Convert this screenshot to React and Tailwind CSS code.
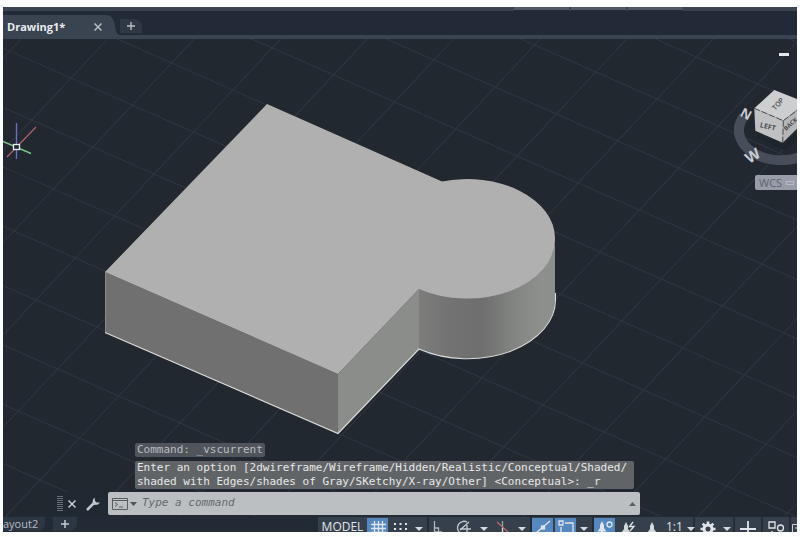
import React from "react";

const GRID_LINES = (() => {
  const ox = 434, oy = 60;
  const a = [61.2, 27];
  const b = [-39.4, 42];
  const lines = [];
  for (let k = -14; k <= 18; k++) {
    const bx = ox + k * b[0], by = oy + k * b[1];
    lines.push([bx - 20 * a[0], by - 20 * a[1], bx + 20 * a[0], by + 20 * a[1]]);
    const ax = ox + k * a[0], ay = oy + k * a[1];
    lines.push([ax - 20 * b[0], ay - 20 * b[1], ax + 20 * b[0], ay + 20 * b[1]]);
  }
  return lines;
})();

function Model() {
  return (
    <svg
      className="absolute inset-0 h-full w-full"
      viewBox="3 39 794 477"
      preserveAspectRatio="xMinYMin slice"
      role="img"
      aria-label="Shaded solid model"
    >
      <defs>
        <linearGradient id="barrel" gradientUnits="userSpaceOnUse" x1="419" y1="0" x2="556" y2="0">
          <stop offset="0" stopColor="#7d7d7c" />
          <stop offset="0.2" stopColor="#737373" />
          <stop offset="0.45" stopColor="#6d6e6d" />
          <stop offset="0.7" stopColor="#838583" />
          <stop offset="0.9" stopColor="#8e908e" />
          <stop offset="1" stopColor="#8b8f8b" />
        </linearGradient>
      </defs>
      <g stroke="#2d363e" strokeWidth="1.1">
        {GRID_LINES.map((l, i) => (
          <line key={i} x1={l[0]} y1={l[1]} x2={l[2]} y2={l[3]} />
        ))}
      </g>
      <path d="M105 272 L338 374 V433.5 L105 332.5 Z" fill="#707070" />
      <path d="M338 374 L419 289 V349 L338 433.5 Z" fill="#8a8d89" />
      <path d="M419 288 A88 59 0 0 0 555 238.500 V298.500 A88 59 0 0 1 419 349 Z" fill="url(#barrel)" />
      <path
        d="M267 104 L442 181.500 A88 59 0 0 1 555 238.500 A88 59 0 0 1 419 289 L338 374 L105 272 Z"
        fill="#b0b0b0"
      />
      <path
        d="M105 332.500 L338 433.500 L419 349 A88 59 0 0 0 555.500 298.500 V293"
        fill="none"
        stroke="#dcdedc"
        strokeWidth="1.1"
      />
      <path d="M105.500 272 V332" stroke="#8b8d8b" strokeWidth="0.8" />
      <path d="M16.500 123 V159" stroke="#6f6cc0" strokeWidth="1.4" />
      <path d="M36 127 L7 157" stroke="#b5616c" strokeWidth="1.2" />
      <path d="M3 141.500 L31 153.500" stroke="#7cc58a" strokeWidth="1.4" />
      <rect x="13.500" y="144.500" width="6" height="5" fill="#212a33" stroke="#e8ecee" strokeWidth="1.3" />
    </svg>
  );
}

function ViewCube() {
  return (
    <svg
      className="absolute right-0 top-[46px] h-[85px] w-[65px] font-['Open_Sans',sans-serif]"
      viewBox="732 85 65 85"
      role="img"
      aria-label="View cube"
    >
      <path d="M744 116 A42 30 0 0 0 800 157" fill="none" stroke="#474e5a" strokeWidth="10" />
      <path d="M757 133 L783 145 L797 132 V140 L784 150 L760 139 Z" fill="#1c242c" />
      <path d="M774.300 90 L754.300 108.300 L783.300 120.700 L806 102.500 Z" fill="#cdcecf" />
      <path d="M754.300 108.300 L755.300 130.700 L782.700 142.700 L783.300 120.700 Z" fill="#c0c1c2" />
      <path d="M783.300 120.700 L782.700 142.700 L806 120 V103 Z" fill="#b5b6b7" />
      <path
        d="M754.300 108.300 L783.300 120.700 L797 110.500 M783.300 120.700 L782.700 142.700"
        fill="none"
        stroke="#4a4d50"
        strokeWidth="1"
        strokeDasharray="6 2"
      />
      <text x="778" y="106.500" fontSize="7" fontWeight="600" fill="#4d4f52" textAnchor="middle" transform="rotate(-48 778 104)">TOP</text>
      <text x="768" y="129" fontSize="7" fontWeight="700" fill="#4d4f52" textAnchor="middle" transform="rotate(14 768 126)">LEFT</text>
      <text x="786" y="131" fontSize="6" fontWeight="700" fill="#4d4f52" transform="rotate(-42 786 131)">BACK</text>
      <text x="746" y="118.500" fontSize="13" fontWeight="700" fill="#c9ccd0" textAnchor="middle" transform="rotate(28 746 114)">N</text>
      <text x="752.500" y="161" fontSize="15" fontWeight="700" fill="#c9ccd0" textAnchor="middle" transform="rotate(-32 752.5 155.5)">W</text>
    </svg>
  );
}

function Caret({ label }) {
  return (
    <button type="button" aria-label={label} className="flex h-5 w-4 justify-center pt-[10px]">
      <svg className="h-1 w-2" viewBox="0 0 8 4"><path d="M0 0 H8 L4 4 Z" fill="#d6dadf" /></svg>
    </button>
  );
}

function Tool({ label, active, wide, children }) {
  return (
    <button
      type="button"
      aria-label={label}
      aria-pressed={!!active}
      className={`flex h-6 justify-center ${wide ? "w-[26px]" : "w-[21px]"} ${active ? "mt-px bg-[#5688c0]" : "pt-px"}`}
    >
      <svg className="h-5 w-5 shrink-0" viewBox="0 0 20 20" fill="none" stroke="#e1e5e9" strokeWidth="1.3">
        {children}
      </svg>
    </button>
  );
}

function Group({ children }) {
  return <div className="flex h-6 shrink-0 bg-[#36404d]">{children}</div>;
}

const PERSON = "M10 4 L12 8 V11 L14.500 14.500 H11 V20 H9 V14.500 H5.500 L8 11 V8 Z";

function StatusBar() {
  return (
    <footer className="flex h-4 shrink-0 items-start overflow-hidden bg-[#212a35] pt-px font-['Open_Sans',sans-serif]">
      <nav className="flex items-start" aria-label="Layouts">
        <button type="button" className="h-[14px] w-[42px] rounded-br-lg bg-[#2d3743] text-left text-[11px] leading-3 text-[#b4bac2]">
          ayout2
        </button>
        <button type="button" aria-label="New layout" className="ml-2 flex h-[14px] w-6 items-center justify-center rounded-br-lg bg-[#2d3743]">
          <svg className="h-2 w-2" viewBox="0 0 8 8"><path d="M4 0 V8 M0 4 H8" stroke="#c6cbd1" strokeWidth="1.500" /></svg>
        </button>
      </nav>
      <div className="ml-auto flex h-6 shrink-0 gap-[2px] bg-[#232c37]">
        <Group>
          <button type="button" className="flex w-[49px] items-start justify-center text-xs leading-5 text-[#e1e4e8]">MODEL</button>
          <Tool label="Grid" active>
            <path d="M6.500 3 V20 M10.500 3 V20 M14.500 3 V20 M3 6.500 H18 M3 10.500 H18 M3 14.500 H18" />
          </Tool>
          <Tool label="Snap" wide>
            <path d="M3 6 h2 M8.500 6 h2 M14 6 h2 M3 11 h2 M8.500 11 h2 M14 11 h2" strokeWidth="2" />
          </Tool>
          <div className="-ml-1 flex w-[17px] justify-center"><Caret label="Snap options" /></div>
        </Group>
        <Group>
          <Tool label="Ortho"><path d="M4.500 3 V14 H12 M4.500 10 H8.500 V14" stroke="#b0b6be" /></Tool>
          <Tool label="Polar tracking" wide>
            <path d="M14 4 A6.500 6.500 0 1 0 16 14 M7 12 L16 4 M7 11 H18 M14 7 V15" stroke="#c4cad0" />
          </Tool>
          <Caret label="Polar options" />
          <Tool label="Isometric drafting">
            <path d="M9.500 3 V10" stroke="#7fb39a" /><path d="M4 4 L15 14" stroke="#bb656c" /><path d="M9.500 10 V20" />
          </Tool>
          <div className="flex w-[17px] justify-center"><Caret label="Isometric options" /></div>
        </Group>
        <Group>
          <div className="flex gap-[2px]">
            <Tool label="Object snap tracking" active>
              <path d="M3 15 L17 3" /><rect x="8.500" y="8" width="3" height="3" fill="#e1e5e9" />
            </Tool>
            <Tool label="Object snap" active>
              <path d="M3 3 h4 v4 h-4 Z M9 5 H17 V20 M5 9 V20" />
            </Tool>
          </div>
          <Caret label="Object snap options" />
        </Group>
        <Group>
          <Tool label="Annotation visibility" active>
            <path d={PERSON} fill="#e1e5e9" stroke="none" transform="translate(-3 -1)" /><circle cx="14.500" cy="6.500" r="2.500" />
          </Tool>
          <Tool label="Auto scale" wide>
            <path d={PERSON} fill="#d3d8dd" stroke="none" transform="translate(-2 0)" /><path d="M15 4 L11.500 8.500 H16 L12 13" />
          </Tool>
          <Tool label="Annotation scale"><path d={PERSON} fill="#d3d8dd" stroke="none" /></Tool>
          <button type="button" className="flex w-[31px] items-start gap-1 pl-1 text-xs leading-5 text-[#e1e4e8]">
            1:1
            <svg className="mt-[10px] h-1 w-2 shrink-0" viewBox="0 0 8 4"><path d="M0 0 H8 L4 4 Z" fill="#d6dadf" /></svg>
          </button>
        </Group>
        <Group>
          <Tool label="Workspace" wide>
            <circle cx="10" cy="11" r="4" strokeWidth="3" />
            <path d="M10 3.500 V6 M10 16 V19 M2.500 11 H5 M15 11 H17.500 M4.700 5.700 L6.500 7.500 M15.300 5.700 L13.500 7.500 M4.700 16.300 L6.500 14.500 M15.300 16.300 L13.500 14.500" strokeWidth="2.600" />
          </Tool>
          <div className="flex w-3 justify-center"><Caret label="Workspace options" /></div>
        </Group>
        <Group>
          <Tool label="Annotation monitor" wide><path d="M10 3 V20 M2 11 H18" strokeWidth="1.800" /></Tool>
        </Group>
        <Group>
          <Tool label="Isolate objects" wide>
            <path d="M3 4 h6 v6 h-6 Z M6 13 v4 h5" /><circle cx="14.500" cy="10" r="3" />
          </Tool>
        </Group>
        <Group>
          <button type="button" aria-label="Full screen" className="w-[6px] overflow-hidden pt-1">
            <svg className="h-4 w-4" viewBox="0 0 16 16" fill="none" stroke="#cdd2d7"><path d="M1.500 1.500 H14 V14 H1.500 Z M4 5 H8" /></svg>
          </button>
        </Group>
      </div>
    </footer>
  );
}

function CommandWindow() {
  return (
    <section
      aria-label="Command line"
      className="absolute inset-x-0 bottom-0 pl-[50px] pr-[157px] pb-px font-['DejaVu_Sans_Mono',monospace] text-[11px]"
    >
      <div className="flex flex-col items-start gap-1 pb-[3px] pl-[82px]">
        <p className="rounded-xs bg-[#4f555b] px-[2px] leading-[14px] text-[#b9bdc1]">Command: _vscurrent</p>
        <p className="mr-[6px] self-stretch whitespace-nowrap rounded-xs bg-[#616466] px-[2px] leading-[14px] text-[#e6e8e9]">
          Enter an option [2dwireframe/Wireframe/Hidden/Realistic/Conceptual/Shaded/
          <br />
          shaded with Edges/shades of Gray/SKetchy/X-ray/Other] &lt;Conceptual&gt;: _r
        </p>
      </div>
      <div className="flex h-[23px]">
        <div className="flex w-[55px] shrink-0 items-center gap-1 bg-[#202832] pl-1">
          <svg className="h-4 w-[6px]" viewBox="0 0 6 16">
            <path d="M1 0 V16 M3 0 V16 M5 0 V16" stroke="#aeb4ba" strokeDasharray="1 1" />
          </svg>
          <button type="button" aria-label="Close command line">
            <svg className="h-[10px] w-[10px]" viewBox="0 0 10 10"><path d="M1.500 1.500 L8.500 8.500 M8.500 1.500 L1.500 8.500" stroke="#c3c8cd" strokeWidth="1.500" /></svg>
          </button>
          <button type="button" aria-label="Customize" className="ml-1">
            <svg className="h-4 w-4" viewBox="0 0 16 16">
              <path d="M2 14 L8.500 7.500" stroke="#c3c8cd" strokeWidth="2.500" />
              <path d="M9.500 1.500 L8 3.500 L7.500 6.500 L9.500 9 L13 8.500 L15 6.500 L11.500 6.500 L10 5 Z" fill="#c3c8cd" />
            </svg>
          </button>
        </div>
        <div className="flex flex-1 items-center rounded-xs bg-[#bcbfc1] pl-1 pr-1">
          <button type="button" aria-label="Recent commands" className="flex items-center gap-[2px]">
            <svg className="h-3 w-4" viewBox="0 0 16 12" fill="none" stroke="#585d62">
              <path d="M0.500 0.500 H15.500 V11.500 H0.500 Z M0.500 2.500 H15.500 M3 4.500 L5.500 6.500 L3 8.500 M7 9 H11" />
            </svg>
            <svg className="h-1 w-[7px]" viewBox="0 0 7 4"><path d="M0 0 H7 L3.500 4 Z" fill="#4e5358" /></svg>
          </button>
          <input
            type="text"
            aria-label="Command"
            placeholder="Type a command"
            className="ml-[5px] min-w-0 flex-1 bg-transparent italic text-[#33373b] outline-none placeholder:text-[#65696d]"
          />
          <button type="button" aria-label="Command history">
            <svg className="h-1 w-[7px]" viewBox="0 0 7 4"><path d="M0 4 H7 L3.500 0 Z" fill="#5a5f64" /></svg>
          </button>
        </div>
      </div>
    </section>
  );
}

function TabBar() {
  return (
    <header className="shrink-0 font-['Open_Sans',sans-serif]">
      <div className="flex h-1 justify-end gap-[2px] bg-[#3a434e] pr-[114px]">
        <span className="w-[55px] border-b border-[#232b35] bg-[#515967]" />
        <span className="w-[55px] border-b border-[#232b35] bg-[#515967]" />
        <span className="w-[55px] border-b border-[#232b35] bg-[#515967]" />
      </div>
      <div className="flex h-7 items-start border-b-4 border-[#3a4350] bg-[#212a36] pt-1">
        <div className="flex h-6 shrink-0">
          <div className="flex w-[103px] items-center bg-[#3a4451] pl-1">
            <button type="button" className="text-[11px] font-bold leading-5 text-[#e9ecef]">Drawing1*</button>
            <button type="button" aria-label="Close drawing" className="ml-auto mr-1">
              <svg className="h-2 w-2" viewBox="0 0 8 8"><path d="M0.500 0.500 L7.500 7.500 M7.500 0.500 L0.500 7.500" stroke="#b8bdc3" strokeWidth="1.500" /></svg>
            </button>
          </div>
          <svg className="h-6 w-[14px]" viewBox="0 0 14 24"><path d="M0 0 C6 0 8 5 9 11 C10 16 11 20 14 20 V24 H0 Z" fill="#3a4451" /></svg>
        </div>
        <button type="button" aria-label="New drawing" className="flex h-[14px] w-[22px] translate-y-0 items-center justify-center self-start rounded-tr-lg bg-[#2f3843] mt-1">
          <svg className="h-2 w-2" viewBox="0 0 8 8"><path d="M4 0 V8 M0 4 H8" stroke="#b8bdc3" strokeWidth="1.400" /></svg>
        </button>
      </div>
    </header>
  );
}

export default function App() {
  return (
    <div className="flex h-screen flex-col bg-[#fdfefe] px-[3px] pt-[7px] pb-[5px]">
      <TabBar />
      <main className="relative min-h-0 flex-1 overflow-hidden bg-[#212830]">
        <Model />
        <button type="button" aria-label="Minimize viewport" className="absolute right-2 top-[14px] h-[3px] w-[10px] bg-[#e6e9ec]" />
        <ViewCube />
        <button
          type="button"
          className="absolute right-0 top-[136px] flex h-[15px] w-[42px] items-center gap-1 rounded-l-xs bg-[#979ca8] pl-1 font-['Open_Sans',sans-serif] text-[11px] leading-[14px] text-[#5d646f]"
        >
          WCS
          <span className="h-1 w-2 border border-[#b6bac3]" />
        </button>
        <CommandWindow />
      </main>
      <StatusBar />
    </div>
  );
}
